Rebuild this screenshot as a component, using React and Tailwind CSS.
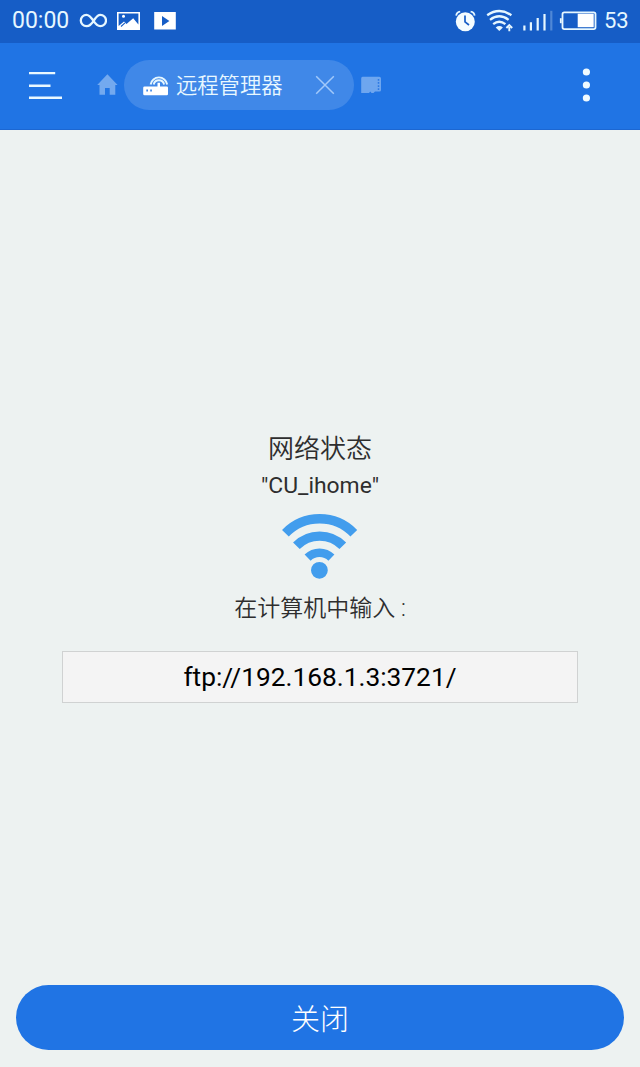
import React from "react";

function StatusBar() {
  return (
    <div className="flex h-[43px] shrink-0 items-center bg-[#165dc6] pl-[12px] text-[#e6f7ff]">
      <span className="w-[67px] text-[23px] leading-[40px] -mt-[2px] whitespace-nowrap">00:00</span>
      <svg className="h-[43px] w-[28px] shrink-0" viewBox="79 0 28 43" fill="none" stroke="currentColor" strokeWidth="2.3">
        <path d="M93.3 20.5C90.5 16.5 88.5 14.8 86.5 14.8A5.7 5.7 0 0 0 86.5 26.2C90.5 26.2 93 22 94.5 19.5C96.5 16.5 98 14.8 100.3 14.8A5.7 5.7 0 0 1 100.3 26.2C97.5 26.2 95.7 24.3 93.3 20.5Z" />
      </svg>
      <svg className="h-[43px] w-[71px] shrink-0" viewBox="107 0 71 43">
        <path fill="#fff" fillRule="evenodd" d="M117 12H140V30H117ZM118.6 13.6V26L124 21.5L126.5 24L133.2 18.2L138.4 24.5V13.6Z" />
        <circle cx="123.5" cy="16.3" r="1.5" fill="#fff" />
        <path d="M119 28L124.5 23L126 24.5L122 28Z" fill="#fff" />
        <path d="M121 26.5L125 22.8" stroke="#165dc6" strokeWidth="1.1" />
        <path fill="#fff" fillRule="evenodd" d="M154.2 12H175.8V29.6H154.2ZM162 16V26L169.4 21Z" />
      </svg>
      <svg className="ml-auto h-[43px] w-[147px] shrink-0" viewBox="452 0 147 43" fill="none" stroke="#e6f7ff">
        <circle cx="465.3" cy="21.7" r="9.5" fill="#f4fcff" stroke="none" />
        <path d="M456.2 15.7C456.4 13.4 457.8 12 460.2 11.7M470.6 11.7C473 12 474.4 13.4 474.6 15.7" strokeWidth="1.8" />
        <path d="M465 15.5V21.8L469 25" stroke="#165dc6" strokeWidth="1.7" />
        <g strokeWidth="2.3">
          <path d="M487.2 15.2Q499.2 6.8 511.4 15.2" />
          <path d="M490 19.8Q499.2 12.8 508.6 19.8" />
          <path d="M493.2 24.2Q499.2 19.2 505.4 24.2" />
        </g>
        <path d="M499.3 31L495.7 27.4Q499.3 24.8 502.9 27.4Z" fill="#e6f7ff" stroke="none" />
        <path d="M509.3 31.3V27M506.4 28L509.3 25L512.2 28" strokeWidth="1.9" />
        <g strokeWidth="2.2">
          <path d="M524.4 25.5V30.5M530.9 22.2V30.5M537.7 18V30.5M544.5 14V30.5" />
          <path d="M551.3 10.8V30.5" opacity=".28" />
        </g>
        <rect x="562.5" y="12.3" width="33" height="16.8" rx="1.8" strokeWidth="1.8" />
        <path d="M560.8 18.2V23.2" strokeWidth="1.8" />
        <rect x="577.7" y="13.7" width="16" height="13.5" fill="#fff" stroke="none" />
      </svg>
      <span className="w-[41px] pl-[5px] text-[22px] leading-[40px] -mt-[2px]">53</span>
    </div>
  );
}

function Toolbar() {
  return (
    <header className="flex h-[87px] shrink-0 items-center border-b border-[#1c67d2] bg-[#2074e4] pb-[2px]">
      <svg className="ml-[28px] h-[32px] w-[34px]" viewBox="28 69.5 34 32" fill="none" stroke="#e9f8ff" strokeWidth="2.4">
        <path d="M29 73.6H55.2M29 86.2H50.5M29 98.2H62" />
      </svg>
      <svg className="ml-[35px] h-[22px] w-[21px]" viewBox="97 74.5 21 22" fill="#73a9ef">
        <path d="M107.4 74.8L117.6 85.5H115.3V95.2H109.7V88.5H105V95.2H99.5V85.5H97.2Z" />
      </svg>
      <div className="ml-[6px] flex h-[50px] w-[230px] items-center rounded-full bg-[#4088e8]">
        <svg className="ml-[19px] h-[24px] w-[26px]" viewBox="143 73 26 24">
          <path d="M144.6 86.5H157.5V82.8H160V86.5H166.8Q168 86.5 168 87.7V94Q168 95.2 166.8 95.2H144.6Q143.2 95.2 143.2 94V87.7Q143.2 86.5 144.6 86.5Z" fill="#fff" />
          <path d="M150.6 84.5A8.4 8.4 0 0 1 167.2 84.5M153.7 84.5A5.3 5.3 0 0 1 164.1 84.5" fill="none" stroke="#e6f7ff" strokeWidth="1.9" />
          <path d="M146.3 89.5H148V91.5H146.3ZM150.2 89.5H151.9V91.5H150.2Z" fill="#4088e8" />
        </svg>
        <span className="ml-[7px] mt-[2px] whitespace-nowrap text-[21.3px] font-[350] leading-[30px] text-[#e9f8ff]">远程管理器</span>
        <svg className="ml-auto mr-[19px] h-[20px] w-[20px]" viewBox="0 0 20 20" fill="none" stroke="#a2c9fa" strokeWidth="1.5">
          <path d="M1.2 1.2L18.8 18.8M18.8 1.2L1.2 18.8" />
        </svg>
      </div>
      <svg className="ml-[7px] h-[18px] w-[21px]" viewBox="361 76 21 18">
        <path d="M362.5 76.8H379.3Q381 76.8 381 78.5V90Q381 91.5 379.5 91.5H375L373.5 93H371.5L370.3 91.5L369 93H361.2V78.5Q361.2 76.8 362.5 76.8Z" fill="#6ea6ef" />
        <path d="M378.5 79V91" stroke="#2c79e4" strokeWidth="1.5" strokeDasharray="1.7 1.4" />
      </svg>
      <svg className="ml-auto mr-[48px] h-[36px] w-[12px]" viewBox="0 0 12 36" fill="#effaff">
        <circle cx="6.4" cy="5" r="3.6" />
        <circle cx="6.4" cy="18" r="3.6" />
        <circle cx="6.4" cy="31" r="3.6" />
      </svg>
    </header>
  );
}

function WifiMark() {
  return (
    <svg className="mt-[11px] h-[68px] w-[80px]" viewBox="280 512 80 68" fill="none" stroke="#429ded" strokeWidth="9.4">
      <path d="M285.4 533.2A47.6 47.6 0 0 1 353.8 533.2" />
      <path d="M296.4 545.8A32.6 32.6 0 0 1 342.8 545.8" />
      <path d="M307.6 557.6A17 17 0 0 1 331.4 557.6" strokeWidth="8.6" />
      <circle cx="319.4" cy="570.3" r="9.4" fill="#429ded" stroke="#edf2f1" strokeWidth="2" />
    </svg>
  );
}

export default function App() {
  return (
    <div className="flex h-[1067px] w-[640px] flex-col overflow-hidden bg-[#edf2f1] font-[Roboto,'Noto_Sans_CJK_SC',sans-serif]">
      <StatusBar />
      <Toolbar />
      <main className="flex flex-1 flex-col items-center text-[#2e2e2e]">
        <h1 className="mt-[299px] text-[26px] font-[350] leading-[40px]">网络状态</h1>
        <p className="mt-[2px] text-[22.9px] leading-[30px]">"CU_ihome"</p>
        <WifiMark />
        <p className="mt-[14px] text-[23px] font-[350] leading-[30px]">在计算机中输入 :</p>
        <div className="mt-[27px] flex h-[52px] w-[516px] items-center justify-center border border-[#d0d2d2] bg-[#f4f4f4] pt-px text-[26.3px] text-black">
          ftp://192.168.1.3:3721/
        </div>
      </main>
      <button className="mx-[16px] mb-[17px] h-[65px] shrink-0 rounded-full bg-[#2074e4] pt-[3px] text-[29px] font-light leading-[62px] text-white">
        <span className="block translate-y-px">关闭</span>
      </button>
    </div>
  );
}
